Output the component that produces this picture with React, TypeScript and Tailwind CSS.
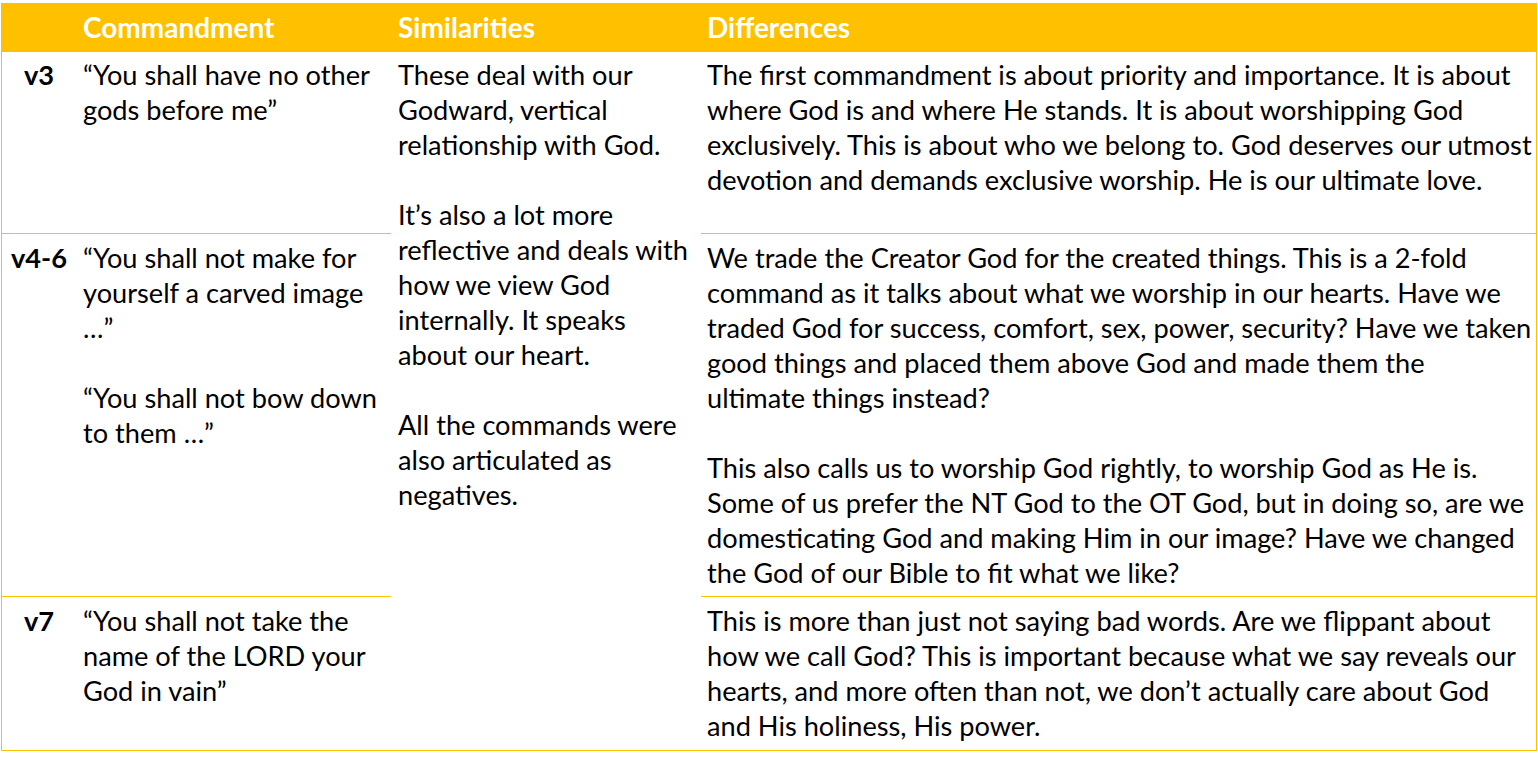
import React from "react";

const Lines = ({ lines }: { lines: string[] }) => (
  <>
    {lines.map((l, i) => (
      <div key={i} className="h-[35px] whitespace-nowrap">
        {l === "" ? "\u00a0" : l}
      </div>
    ))}
  </>
);

export default function App() {
  const font = { fontFamily: "Lato, 'Liberation Sans', sans-serif" };
  return (
    <div className="w-[1538px] h-[762px] bg-white pt-[3px] pl-[1px]" style={font}>
      <div className="w-[1536px] grid grid-cols-[74px_315px_310px_836px] grid-rows-[49px_182px_363px_153px] border-l border-r border-b border-[#FFC000] text-[27.2px] leading-[35px] text-black">
        {/* header */}
        <div className="bg-[#FFC000]" />
        <div className="bg-[#FFC000] text-white font-bold text-[28px] flex items-center pl-[7px]">Commandment</div>
        <div className="bg-[#FFC000] text-white font-bold text-[28px] flex items-center pl-[7px]">Similarities</div>
        <div className="bg-[#FFC000] text-white font-bold text-[28px] flex items-center pl-[6px]">Differences</div>

        {/* row 1 */}
        <div className="border-b border-[#FFC000] pt-[5px] text-center font-bold">v3</div>
        <div className="border-b border-[#FFC000] pt-[5px] pl-[7px]">
          <Lines lines={["“You shall have no other", "gods before me”"]} />
        </div>
        <div className="row-span-3 pt-[5px] pl-[7px]">
          <Lines
            lines={[
              "These deal with our",
              "Godward, vertical",
              "relationship with God.",
              "",
              "It’s also a lot more",
              "reflective and deals with",
              "how we view God",
              "internally. It speaks",
              "about our heart.",
              "",
              "All the commands were",
              "also articulated as",
              "negatives.",
            ]}
          />
        </div>
        <div className="border-b border-[#FFC000] pt-[5px] pl-[6px]">
          <Lines
            lines={[
              "The first commandment is about priority and importance. It is about",
              "where God is and where He stands. It is about worshipping God",
              "exclusively. This is about who we belong to. God deserves our utmost",
              "devotion and demands exclusive worship. He is our ultimate love.",
            ]}
          />
        </div>

        {/* row 2 */}
        <div className="border-b border-[#FFC000] pt-[6px] text-center font-bold">v4-6</div>
        <div className="border-b border-[#FFC000] pt-[6px] pl-[7px]">
          <Lines
            lines={[
              "“You shall not make for",
              "yourself a carved image",
              "…”",
              "",
              "“You shall not bow down",
              "to them …”",
            ]}
          />
        </div>
        <div className="border-b border-[#FFC000] pt-[6px] pl-[6px]">
          <Lines
            lines={[
              "We trade the Creator God for the created things. This is a 2-fold",
              "command as it talks about what we worship in our hearts. Have we",
              "traded God for success, comfort, sex, power, security? Have we taken",
              "good things and placed them above God and made them the",
              "ultimate things instead?",
              "",
              "This also calls us to worship God rightly, to worship God as He is.",
              "Some of us prefer the NT God to the OT God, but in doing so, are we",
              "domesticating God and making Him in our image? Have we changed",
              "the God of our Bible to fit what we like?",
            ]}
          />
        </div>

        {/* row 3 */}
        <div className="pt-[6px] text-center font-bold">v7</div>
        <div className="pt-[6px] pl-[7px]">
          <Lines lines={["“You shall not take the", "name of the LORD your", "God in vain”"]} />
        </div>
        <div className="pt-[6px] pl-[6px]">
          <Lines
            lines={[
              "This is more than just not saying bad words. Are we flippant about",
              "how we call God? This is important because what we say reveals our",
              "hearts, and more often than not, we don’t actually care about God",
              "and His holiness, His power.",
            ]}
          />
        </div>
      </div>
    </div>
  );
}
